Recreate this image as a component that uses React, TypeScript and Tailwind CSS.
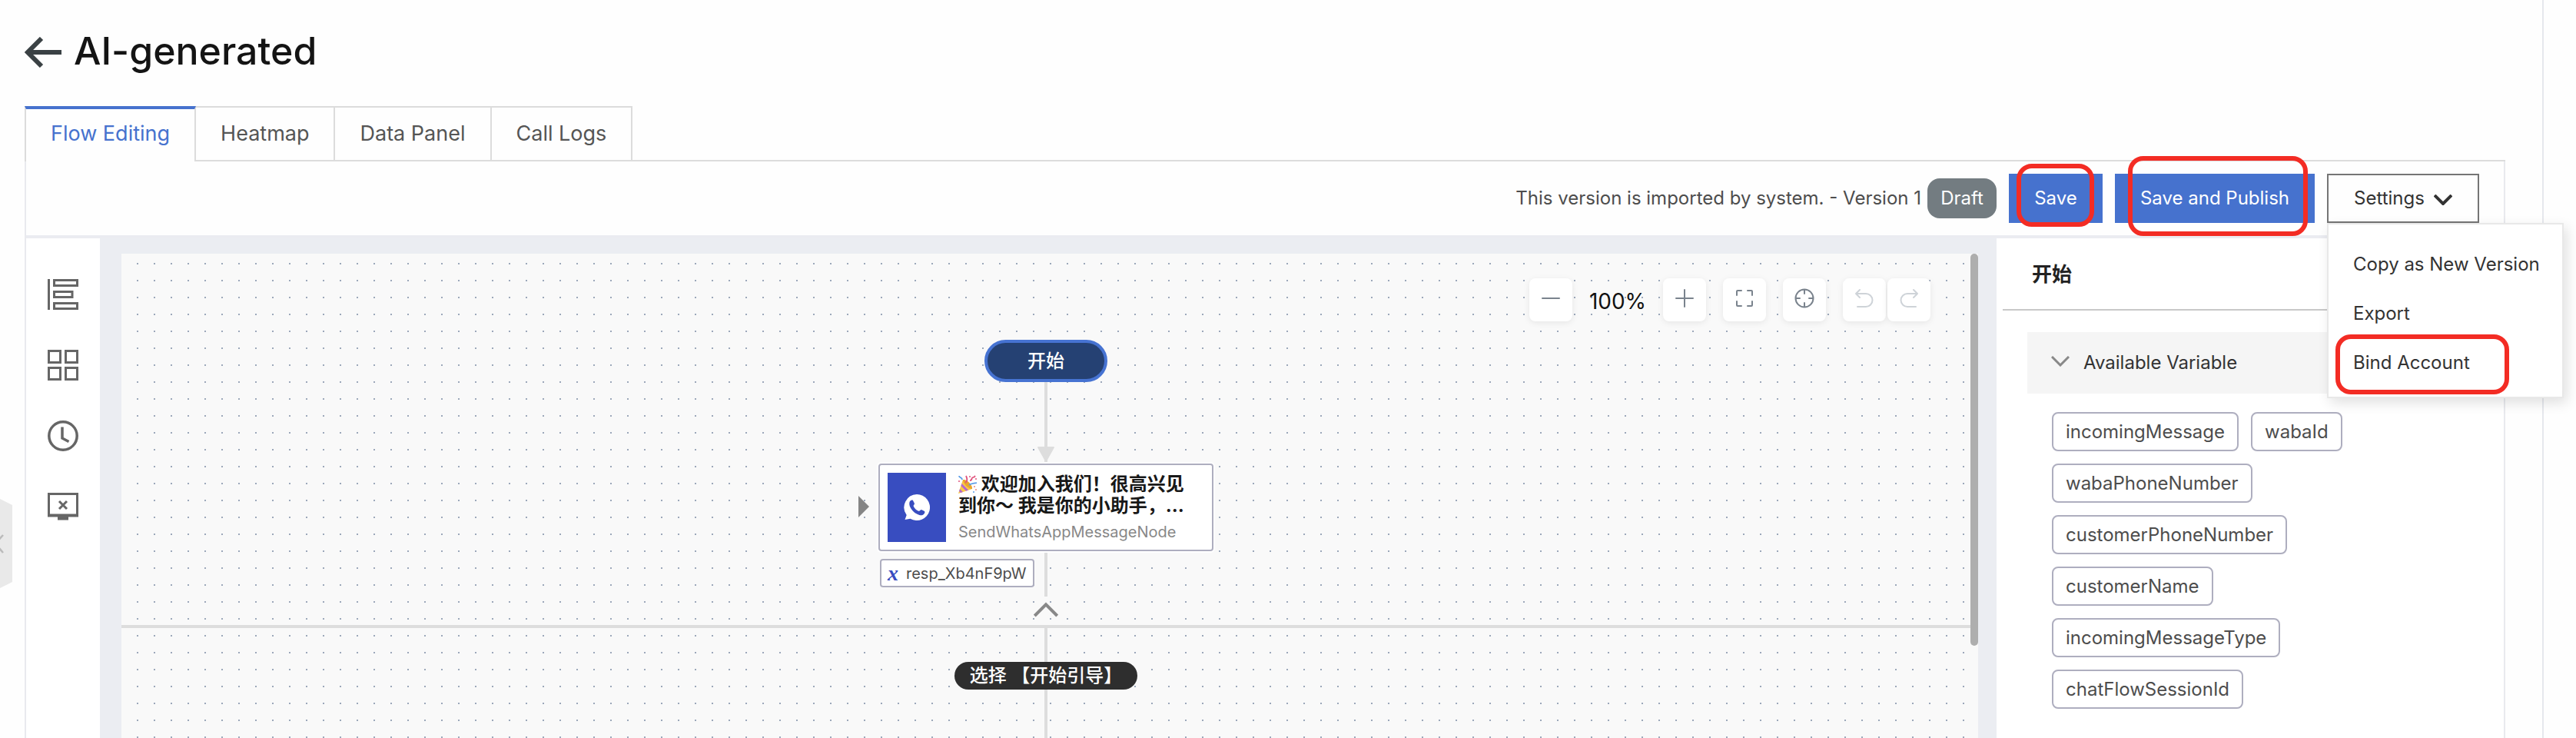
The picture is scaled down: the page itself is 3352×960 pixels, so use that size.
import React from "react";

const tabs = ["Flow Editing", "Heatmap", "Data Panel", "Call Logs"];
const variables = [
  "incomingMessage",
  "wabaId",
  "wabaPhoneNumber",
  "customerPhoneNumber",
  "customerName",
  "incomingMessageType",
  "chatFlowSessionId",
];
const menuItems = ["Copy as New Version", "Export", "Bind Account"];

function Chevron({ className, up = false, stroke = 3 }: { className: string; up?: boolean; stroke?: number }) {
  return (
    <svg viewBox="0 0 24 14" className={className} fill="none" stroke="currentColor" strokeWidth={stroke} aria-hidden="true">
      <path d={up ? "M1 13 12 2l11 11" : "M1 1l11 11L23 1"} />
    </svg>
  );
}

function PartyPopper() {
  return (
    <svg viewBox="0 0 24 24" className="inline-block size-6 align-[-4px]" role="img" aria-label="🎉">
      <path d="M0 24 6 6c5 1 11 7 12 12z" fill="#f9c846" />
      <path d="M4.500 11 13 19.500l-3 1.200L3.500 14zM2 18l4 4-3 1-2-2z" fill="#b467d0" />
      <path d="M6 6c5-1 13 7 12 12-5 0-12-7-12-12z" fill="#eaa52c" />
      <path d="M9 10c3-2 3-5 1-9" stroke="#e0527c" strokeWidth="1.800" fill="none" />
      <path d="M14 13c3-3 6-2 10-3M1 1c0 3 4 1 4 5" stroke="#5b9de8" strokeWidth="1.800" fill="none" />
      <path d="M15 7c4 0 1-3 4-4s2-1 3-2" stroke="#e0527c" strokeWidth="1.800" fill="none" />
      <circle cx="15" cy="2" r="1" fill="#e0527c" />
      <circle cx="23" cy="5" r="1" fill="#e0527c" />
      <circle cx="21" cy="15" r="1" fill="#e8877c" />
      <circle cx="1" cy="8" r="1" fill="#e0527c" />
      <circle cx="20" cy="22" r="1" fill="#5b9de8" />
      <circle cx="23" cy="19" r="1" fill="#e8877c" />
    </svg>
  );
}

function Sidebar() {
  return (
    <nav aria-label="Editor tools" className="flex w-24 shrink-0 flex-col items-center gap-[52px] bg-white pt-[53px] text-[#666]">
      <button aria-label="Outline">
        <svg viewBox="0 0 40 40" className="size-10" fill="none" stroke="currentColor" strokeWidth="3">
          <path d="M1.500 0v40M8.500 1.500h30v7h-30zM8.500 16.500h23.500v7H8.500zM8.500 31.500h30v7h-30z" />
        </svg>
      </button>
      <button aria-label="Components">
        <svg viewBox="0 0 40 40" className="size-10" fill="none" stroke="currentColor" strokeWidth="3">
          <path d="M1.500 1.500h15v15h-15zM23.500 1.500h15v15h-15zM1.500 23.500h15v15h-15zM23.500 23.500h15v15h-15z" />
        </svg>
      </button>
      <button aria-label="History">
        <svg viewBox="0 0 40 40" className="size-10" fill="none" stroke="currentColor" strokeWidth="3.500">
          <circle cx="20" cy="20" r="18.200" />
          <path d="M19 8.500V23l8.500 4.500" />
        </svg>
      </button>
      <button aria-label="Debug screen">
        <svg viewBox="0 0 40 40" className="size-10" fill="none" stroke="currentColor" strokeWidth="3">
          <path d="M1.500 3.500h37v28h-37z" />
          <path d="M0 31.500h40M13 35.500h14" strokeWidth="4" />
          <path d="m15 13 10 10M25 13 15 23" />
        </svg>
      </button>
    </nav>
  );
}

function ToolButton({ label, muted = false, children }: { label: string; muted?: boolean; children: React.ReactNode }) {
  return (
    <button
      aria-label={label}
      className={
        "flex size-14 items-center justify-center rounded-lg bg-white shadow-[0_2px_8px_rgba(0,0,0,0.08)] " +
        (muted ? "text-[#ced3d8]" : "text-[#7a838d]")
      }
    >
      <svg
        viewBox="0 0 24 24"
        className="-mt-1 size-6 overflow-visible"
        fill="none"
        stroke="currentColor"
        strokeWidth="2"
        strokeLinecap="round"
        strokeLinejoin="round"
      >
        {children}
      </svg>
    </button>
  );
}

function CanvasToolbar() {
  return (
    <div className="absolute top-8 right-[62px] flex items-center">
      <ToolButton label="Zoom out">
        <path d="M1 12h22" />
      </ToolButton>
      <span className="w-[118px] pt-1 text-center text-[28px] leading-8 text-[#111]">100%</span>
      <ToolButton label="Zoom in">
        <path d="M1 12h22M12 1v22" />
      </ToolButton>
      <div className="ml-[22px] flex">
        <ToolButton label="Fit to screen">
          <path d="M2 8V3a1 1 0 0 1 1-1h5M16 2h5a1 1 0 0 1 1 1v5M22 16v5a1 1 0 0 1-1 1h-5M8 22H3a1 1 0 0 1-1-1v-5" />
        </ToolButton>
      </div>
      <div className="ml-[22px] flex">
        <ToolButton label="Center">
          <circle cx="12" cy="12" r="11.500" />
          <path d="M12 1v5M12 18v5M1 12h5M18 12h5" />
        </ToolButton>
      </div>
      <div className="ml-[22px] flex gap-0.5">
        <ToolButton label="Undo" muted>
          <path d="m6 1-5 5 5 5M1 6h13a8.500 8.500 0 0 1 0 17H3" />
        </ToolButton>
        <ToolButton label="Redo" muted>
          <path d="m18 1 5 5-5 5M23 6H10a8.500 8.500 0 0 0 0 17h11" />
        </ToolButton>
      </div>
    </div>
  );
}

function FlowCanvas() {
  return (
    <main className="relative min-w-0 flex-1 overflow-hidden bg-[#f9f9f9]">
      <svg className="absolute inset-0 size-full" aria-hidden="true">
        <defs>
          <pattern id="grid-dots" x="20" y="12" width="22" height="22" patternUnits="userSpaceOnUse">
            <rect width="2" height="2" fill="#9ca8ba" />
          </pattern>
        </defs>
        <rect width="100%" height="100%" fill="url(#grid-dots)" />
      </svg>

      <div className="absolute top-[483px] left-0 h-1 w-full bg-[#ddd]" />
      <div className="absolute top-[167px] left-[1201px] h-[110px] w-1 bg-[#ddd]" />
      <svg viewBox="0 0 22 20" className="absolute top-[251px] left-[1192px] h-5 w-[22px]" fill="#ddd" aria-hidden="true">
        <path d="M1 0h20q1 0 1 1L12 19q-1 1-2 0L0 1q0-1 1-1z" />
      </svg>
      <div className="absolute top-[389px] left-[1201px] h-[57px] w-1 bg-[#ddd]" />
      <div className="absolute top-[487px] bottom-0 left-[1201px] w-1 bg-[#ddd]" />

      <div className="absolute top-28 left-[1123px] flex h-[55px] w-40 items-center justify-center rounded-full border-4 border-[#4673d2] bg-[#254173] text-2xl font-medium text-white">
        开始
      </div>

      <svg viewBox="0 0 14 28" className="absolute top-[315px] left-[959px] h-7 w-3.5" fill="#858585" aria-hidden="true">
        <path d="M0 0l14 14L0 28z" />
      </svg>

      <div className="absolute top-[273px] left-[985px] flex h-[114px] w-[436px] rounded-sm border-2 border-[#aeaebf] bg-white p-2.5 ring-2 ring-white">
        <div className="flex w-[76px] shrink-0 items-center justify-center bg-[#384dc0]">
          <svg viewBox="0 0 34 34" className="size-[34px]" aria-hidden="true">
            <path d="M17 0a17 17 0 1 1-8.500 31.700L1.500 33l2.200-6A17 17 0 0 1 17 0z" fill="#fff" />
            <path
              d="M8 9c1-1 3-2 4-1l2 4c0 1-1 2-1.500 3 1.500 3.500 4 6 7.500 7 1-1 2-2 3-2l4 2c1 1 0 3-1 4-2 2-5 1.500-8 0-5-2-8-6-10-10-1-3-1-5 0-7z"
              fill="#384dc0"
            />
          </svg>
        </div>
        <div className="ml-4 min-w-0 flex-1 pt-px">
          <p className="text-2xl leading-7 font-bold whitespace-nowrap text-[#181818]">
            <PartyPopper /> 欢迎加入我们！很高兴见
            <br />
            到你～ 我是你的小助手，...
          </p>
          <p className="mt-1.5 text-xl leading-7 text-[#888]">SendWhatsAppMessageNode</p>
        </div>
      </div>

      <div className="absolute top-[397px] left-[987px] flex h-[37px] items-center gap-2.5 rounded-sm border-2 border-[#aeaebf] bg-white px-2 text-xl text-[#4d4d4d]">
        <span className="font-['Liberation_Serif',serif] text-[28px] leading-6 font-bold text-[#384dc0] italic">x</span>
        resp_Xb4nF9pW
      </div>

      <Chevron up className="absolute top-[453px] left-[1187px] h-5 w-8 text-[#888]" />

      <div className="absolute top-[531px] left-[1084px] flex h-9 w-[238px] items-center justify-center rounded-full bg-[#2e2e2e] text-2xl font-medium whitespace-pre text-white">
        选择 【开始引导】
      </div>

      <CanvasToolbar />
      <div className="absolute top-0 right-0 h-[510px] w-2.5 rounded-full bg-[#aeaeae]" />
    </main>
  );
}

function DetailsPanel() {
  return (
    <aside className="w-[660px] shrink-0 bg-white pl-2">
      <h2 className="h-[92px] px-[38px] pt-[27px] text-[26px] leading-10 font-bold text-[#222]">开始</h2>
      <section className="border-t-2 border-[#c8c8c8] px-8 pt-7">
        <button className="flex h-20 w-full items-center gap-[18px] bg-[#f5f5f5] px-[31px] text-2xl text-[#333]">
          <Chevron className="-mt-1 h-3.5 w-6 text-[#888]" />
          Available Variable
        </button>
        <ul className="flex flex-wrap gap-4 px-8 pt-6 pr-40 text-2xl text-[#4d4d4d]">
          {variables.map((name) => (
            <li key={name} className="flex h-[51px] items-center rounded-lg border-2 border-[#aeaebf] px-4">
              {name}
            </li>
          ))}
        </ul>
      </section>
    </aside>
  );
}

function HighlightBox({ className }: { className: string }) {
  return <span aria-hidden="true" className={"pointer-events-none absolute border-6 border-[#f32c24] " + className} />;
}

function VersionBar() {
  return (
    <div className="flex h-24 items-center justify-end gap-4 pr-8 text-2xl">
      <div className="flex items-center gap-2 text-[#4d4d4d]">
        <span>This version is imported by system. - Version 1</span>
        <span className="flex h-[52px] w-[90px] items-center justify-center rounded-2xl bg-[#737c81] text-white">Draft</span>
      </div>
      <div className="relative">
        <button className="h-16 w-[122px] bg-[#4672ce] text-white">Save</button>
        <HighlightBox className="-top-[13px] left-2.5 h-[82px] w-[101px] rounded-[20px]" />
      </div>
      <div className="relative">
        <button className="h-16 w-[260px] bg-[#4672ce] text-white">Save and Publish</button>
        <HighlightBox className="-top-[23px] left-[17px] h-[104px] w-[234px] rounded-[20px]" />
      </div>
      <div className="relative z-10">
        <button className="flex h-16 w-[198px] items-center justify-center gap-3 border-2 border-[#757575] text-[#333]">
          Settings
          <Chevron className="mt-1 h-3.5 w-6" stroke={4} />
        </button>
        <div className="absolute top-16 left-0 h-[228px] w-[308px] border-2 border-[#e8e8e8] bg-white pt-5 text-[#333] shadow-[4px_6px_16px_rgba(0,0,0,0.12)]">
          <ul role="menu">
            {menuItems.map((item) => (
              <li key={item} role="none">
                <button role="menuitem" className="h-16 w-full px-8 text-left whitespace-nowrap">
                  {item}
                </button>
              </li>
            ))}
          </ul>
          <HighlightBox className="top-[143px] left-[9px] h-[78px] w-[226px] rounded-[20px]" />
        </div>
      </div>
    </div>
  );
}

export default function App() {
  return (
    <div className="relative flex h-screen flex-col overflow-hidden bg-[#fefefe] pr-[42px] font-['Inter','Noto_Sans_CJK_SC',sans-serif]">
      <div className="flex min-h-0 flex-1 flex-col border-r-2 border-[#e6e8ed] pr-12 pl-8">
        <header className="flex h-[138px] shrink-0 items-start gap-4 pt-[34px]">
          <button aria-label="Back" className="mt-3.5">
            <svg viewBox="0 0 48 40" className="h-10 w-12" fill="none" stroke="#3a4144" strokeWidth="6">
              <path d="M22 2 4 20l18 18M4 20h44" />
            </svg>
          </button>
          <h1 className="text-[50px] leading-[64px] font-medium text-[#141414]">AI-generated</h1>
        </header>

        <div role="tablist" className="flex h-[72px] shrink-0 text-[27px]">
          {tabs.map((tab, i) => (
            <button
              key={tab}
              role="tab"
              aria-selected={i === 0}
              className={
                i === 0
                  ? "border-t-4 border-r-2 border-l-2 border-[#dcdcdc] border-t-[#4672ce] px-8 pb-1 text-[#4672ce]"
                  : "border-y-2 border-r-2 border-[#dcdcdc] px-8 text-[#555]"
              }
            >
              {tab}
            </button>
          ))}
          <div className="flex-1 border-b-2 border-[#dcdcdc]" />
        </div>

        <div className="flex min-h-0 flex-1 flex-col border-x-2 border-[#e9eaee]">
          <VersionBar />
          <div className="flex min-h-0 flex-1 border-t-4 border-[#ebecf1]">
            <Sidebar />
            <div className="flex min-w-0 flex-1 bg-[#ebedf2] pt-5 pr-6 pl-7">
              <FlowCanvas />
            </div>
            <DetailsPanel />
          </div>
        </div>
      </div>

      <button aria-label="Collapse panel" className="absolute top-[649px] left-0 h-[116px] w-4">
        <svg viewBox="0 0 16 116" className="h-full w-full">
          <path d="M0 0l16 8v100l-16 8z" fill="#e9e9e9" />
          <path d="m4 47-10 11 10 12" fill="none" stroke="#bbb" strokeWidth="2.500" />
        </svg>
      </button>
    </div>
  );
}
